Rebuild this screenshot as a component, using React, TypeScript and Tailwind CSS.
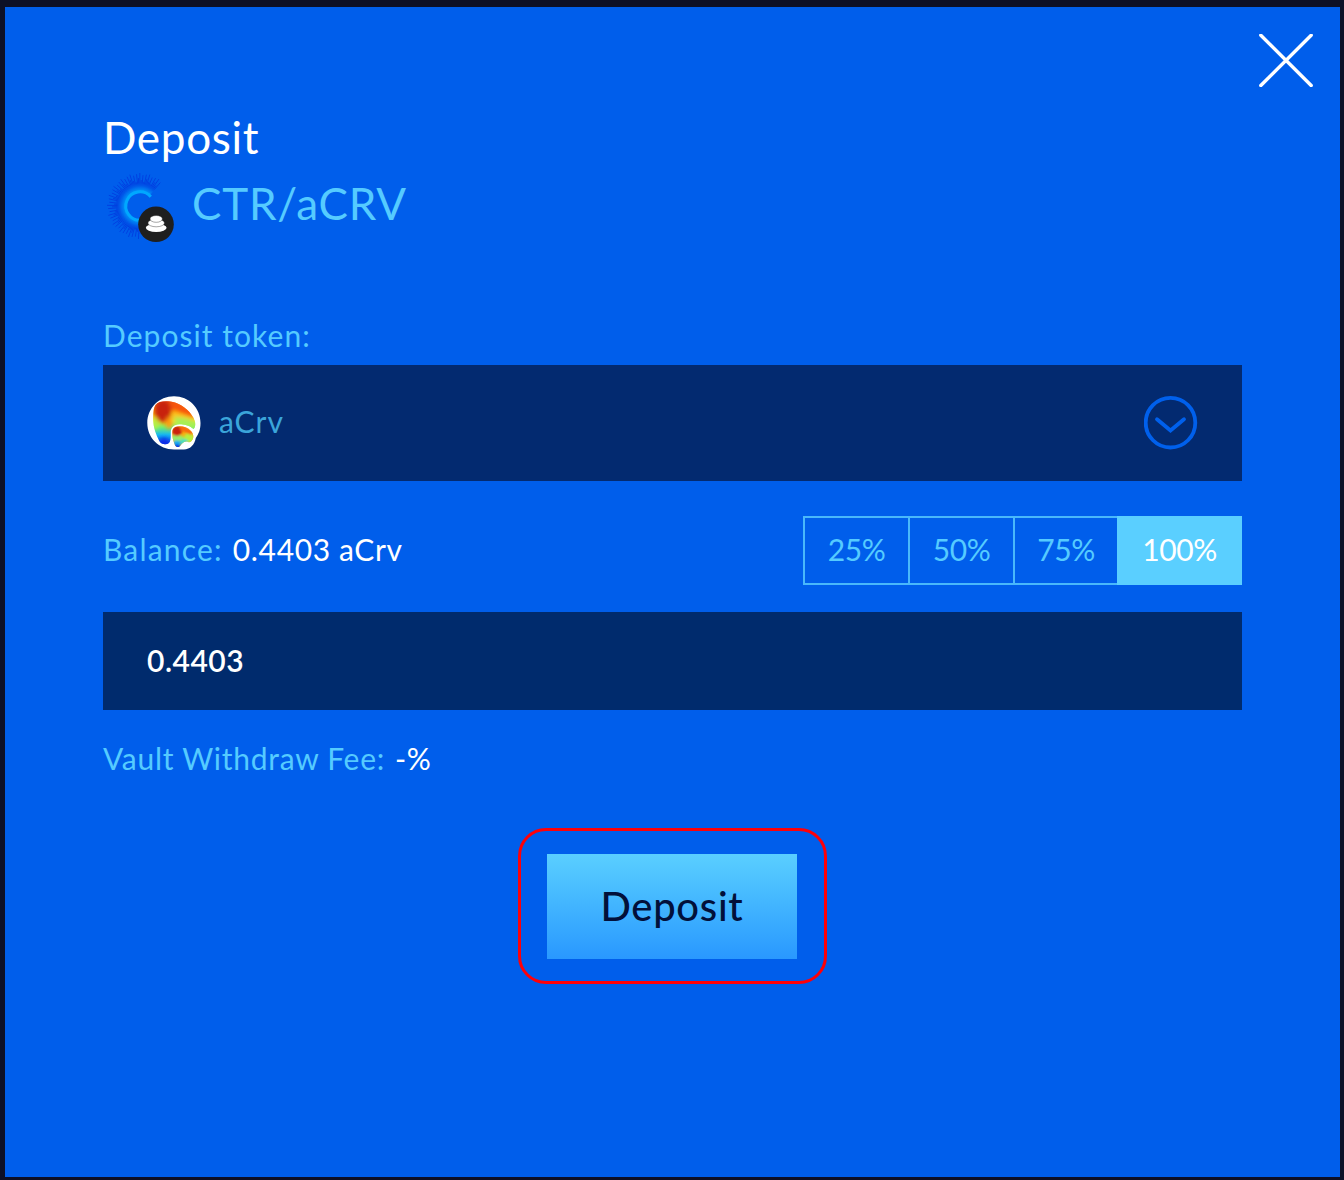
import React from "react";

const RAYS = Array.from({ length: 76 }, (_, i) => {
  const angle = ((-49 - i * 2.95) * Math.PI) / 180;
  const outer = [31, 26, 33, 28, 32, 24][i % 6];
  return {
    x1: 34 + 15 * Math.cos(angle),
    y1: 35 + 15 * Math.sin(angle),
    x2: 34 + outer * Math.cos(angle),
    y2: 35 + outer * Math.sin(angle),
  };
});

function PoolIcon() {
  return (
    <svg className="h-[72px] w-[72px] shrink-0" viewBox="0 0 72 72" fill="none">
      <defs>
        <radialGradient id="ray" gradientUnits="userSpaceOnUse" cx="34" cy="35" r="34">
          <stop offset="0.42" stopColor="#009af8" />
          <stop offset="0.56" stopColor="#0068ee" />
          <stop offset="0.68" stopColor="#0040e0" />
          <stop offset="1" stopColor="#0040e2" />
        </radialGradient>
        <radialGradient id="glow" gradientUnits="userSpaceOnUse" cx="34" cy="35" r="26">
          <stop offset="0.5" stopColor="#00a4ff" />
          <stop offset="0.62" stopColor="#0088f6" />
          <stop offset="0.78" stopColor="#0050e7" />
          <stop offset="1" stopColor="#0050e8" stopOpacity="0" />
        </radialGradient>
      </defs>
      <path d="M46.8 19.6A20 20 0 1 0 37 54.8" stroke="url(#glow)" strokeWidth="13" />
      {RAYS.map((r, i) => (
        <line key={i} x1={r.x1} y1={r.y1} x2={r.x2} y2={r.y2} stroke="url(#ray)" strokeWidth="1" />
      ))}
      <path d="M44.8 25.8A14.2 14.2 0 1 0 35 49.2" stroke="#00a8ff" strokeWidth="3" />
      <circle cx="50" cy="53.3" r="17.8" fill="#1f1f1f" />
      <g fill="#fff">
        <ellipse cx="50.2" cy="56.8" rx="10.4" ry="4.1" />
        <ellipse cx="50.2" cy="52" rx="8.3" ry="3.8" stroke="#1f1f1f" strokeWidth="0.4" />
        <ellipse cx="50.2" cy="47.9" rx="6.2" ry="3.4" stroke="#1f1f1f" strokeWidth="0.4" />
      </g>
    </svg>
  );
}

function TokenIcon() {
  return (
    <svg className="h-[54px] w-[54px] shrink-0" viewBox="0 0 54 54">
      <defs>
        <clipPath id="big">
          <path d="M8.5 9C12 4.5 21 4.6 28 6.5C36 9 45 16.5 47.8 25C48.8 29 48 32 46.5 33C42 29.2 37 28.3 32.5 28.3C27 28.7 24 31 23.8 36C23.9 41 23.8 45 22 47C19 49 14.5 48.6 12.3 45C9 39 6.5 32 6.2 24C6 17 6.5 12 8.5 9Z" />
        </clipPath>
        <clipPath id="small">
          <path d="M25.5 34C27 29.5 34 29.8 38.5 31.2C43 33 46.8 37 46.3 41C46 44 43.5 47 41.3 46C38 44.5 35.5 46.5 33.5 49.5C32 51.8 29 51.7 27.7 48.5C25.5 43 24.8 38 25.5 34Z" />
        </clipPath>
        <filter id="soft" x="-50%" y="-50%" width="200%" height="200%">
          <feGaussianBlur stdDeviation="2" />
        </filter>
        <filter id="softer" x="-50%" y="-50%" width="200%" height="200%">
          <feGaussianBlur stdDeviation="1.3" />
        </filter>
        <linearGradient id="heat" x1="0" y1="0" x2="0" y2="1">
          <stop offset="0" stopColor="#e32a0b" />
          <stop offset="0.26" stopColor="#ff8a00" />
          <stop offset="0.46" stopColor="#f4e526" />
          <stop offset="0.58" stopColor="#6dee74" />
          <stop offset="0.72" stopColor="#14b9f2" />
          <stop offset="0.9" stopColor="#0a3df0" />
        </linearGradient>
      </defs>
      <path d="M27 0.2C42 0.2 53.5 12 53.5 27C53.5 34 51.5 38 48.8 42C47.5 49 43 53.4 37 53.4H27C12 53.4 0.3 42 0.3 27C0.3 12 12 0.2 27 0.2Z" fill="#fff" />
      <g clipPath="url(#big)">
        <rect width="54" height="54" fill="url(#heat)" />
        <g filter="url(#soft)">
          <path d="M24 3L52 18L48 22L24 13Z" fill="#f65308" />
          <path d="M26 15L48 24L40 26L24 21Z" fill="#ffc31a" />
          <path d="M26 21L38 22L50 26L48 34L30 29Z" fill="#a5f055" />
          <ellipse cx="16" cy="15" rx="8.5" ry="11.5" fill="#c8200b" />
          <ellipse cx="22" cy="27" rx="3.5" ry="6" fill="#ff9a0a" />
          <ellipse cx="8" cy="28" rx="3.5" ry="6" fill="#b5ef45" />
          <ellipse cx="17" cy="47" rx="6" ry="5" fill="#0829e6" />
        </g>
      </g>
      <g clipPath="url(#small)">
        <rect x="24" y="29" width="24" height="23" fill="#f7ad12" />
        <g filter="url(#softer)">
          <ellipse cx="42" cy="42" rx="5" ry="5" fill="#b8ef3c" />
          <ellipse cx="30" cy="42" rx="7" ry="3" fill="#93ef69" />
          <ellipse cx="30" cy="35" rx="5" ry="5" fill="#cb210b" />
          <path d="M34 28L47 36L44 39L33 34Z" fill="#f96b0b" />
          <ellipse cx="37" cy="46" rx="4" ry="3" fill="#4ddfbb" />
          <ellipse cx="30" cy="47" rx="4" ry="2.5" fill="#18aaf2" />
          <ellipse cx="30" cy="51" rx="4" ry="2.5" fill="#0a35e8" />
        </g>
      </g>
    </svg>
  );
}

function ChevronCircle() {
  return (
    <svg className="h-[54px] w-[54px]" viewBox="0 0 54 54" fill="none" stroke="#0060ec">
      <circle cx="26.5" cy="26.7" r="24.8" strokeWidth="3.8" />
      <path d="M13 23.2L26.5 34.5L40 23.2" strokeWidth="3.8" strokeLinecap="round" />
    </svg>
  );
}

export default function App() {
  return (
    <div className="h-[1180px] w-[1344px] overflow-hidden bg-[#0d1026] pt-[7px] pl-[5px] font-['Lato',sans-serif]">
      <main className="flex h-[1170px] w-[1335px] flex-col bg-[#005eeb] px-[98px] text-[30px] leading-[36px] text-[#55cbff]">
        <button className="-mr-[71px] mt-[27px] h-[53px] w-[54px] shrink-0 self-end" aria-label="Close">
          <svg className="h-full w-full" viewBox="0 0 54 53" stroke="#fff" strokeWidth="3.4" strokeLinecap="round">
            <path d="M1.8 1.2L52.2 51.5M52.2 1.2L1.8 51.5" />
          </svg>
        </button>
        <h1 className="mt-[22px] h-[56px] text-[44px] leading-[56px] text-white">
          <span className="tracking-[0.7px]">Deposit</span>
        </h1>
        <div className="mt-[6px] flex h-[72px] items-center pl-[3px]">
          <PoolIcon />
          <span className="-mt-[9px] ml-[14px] text-[44px] leading-[56px] tracking-[0.8px]">CTR/aCRV</span>
        </div>
        <div className="mt-[74px] h-[36px] whitespace-nowrap">
          <span className="tracking-[1.05px]">Deposit token:</span>
        </div>
        <div className="mt-[12px] flex h-[116px] shrink-0 items-center justify-between bg-[#032a70] px-[44px]">
          <div className="flex items-center gap-[18px] text-[#3ba5da]">
            <TokenIcon />
            <span className="-mt-[4px] tracking-[1px]">aCrv</span>
          </div>
          <ChevronCircle />
        </div>
        <div className="mt-[35px] flex h-[69px] shrink-0 items-center justify-between">
          <div className="-mt-[3px] flex gap-[10px] whitespace-nowrap">
            <span className="tracking-[1.2px]">Balance:</span>
            <span className="tracking-[0.65px] text-white">0.4403 aCrv</span>
          </div>
          <div className="flex h-[69px] w-[439px] border-2 border-[#49b8fb] text-center leading-[62px] tracking-[-0.4px]">
            <button className="w-[105px] border-r-2 border-[#49b8fb] pb-[3px]">25%</button>
            <button className="w-[105px] border-r-2 border-[#49b8fb] pb-[3px]">50%</button>
            <button className="w-[102px] pb-[3px]">75%</button>
            <button className="-my-[2px] -mr-[2px] flex-1 bg-[#5acfff] pb-[3px] text-white">100%</button>
          </div>
        </div>
        <div className="mt-[27px] flex h-[98px] shrink-0 items-center bg-[#002b6d] px-[44px] font-semibold text-white">
          <span className="-mt-[2px] tracking-[0.5px]">0.4403</span>
        </div>
        <div className="mt-[30px] flex h-[36px] gap-[10px] whitespace-nowrap">
          <span className="tracking-[0.72px]">Vault Withdraw Fee:</span>
          <span className="tracking-[0.6px] text-white">-%</span>
        </div>
        <div className="mt-[52px] ml-[415px] flex h-[156px] w-[309px] shrink-0 items-center justify-center rounded-[28px] border-3 border-[#ff0008]">
          <button className="-ml-px h-[105px] w-[250px] bg-linear-to-b from-[#5acfff] to-[#2998ff] text-[40px] font-medium leading-[102px] text-[#02103a]">
            <span className="tracking-[0.7px]">Deposit</span>
          </button>
        </div>
      </main>
    </div>
  );
}
